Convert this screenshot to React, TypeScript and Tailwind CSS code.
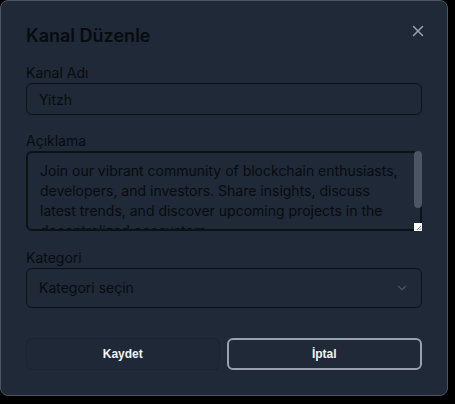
import { X, ChevronDown } from "lucide-react";

const DESC =
  "Join our vibrant community of blockchain enthusiasts, developers, and investors. Share insights, discuss latest trends, and discover upcoming projects in the decentralized ecosystem.";

export default function App() {
  return (
    <div className="h-[404px] w-[455px] bg-black font-['Inter',sans-serif]">
      <div className="relative w-[448px] rounded-lg border border-[#4b5563] bg-[#1f2937] px-[25px] pb-[25px] pt-[21px]">
        <button
          type="button"
          className="absolute right-[20px] top-[21px] text-gray-400"
        >
          <X size={18} strokeWidth={2} />
        </button>

        <h2 className="text-lg font-semibold leading-7 text-[#080b10]">
          Kanal Düzenle
        </h2>

        <div className="mt-[13px]">
          <label className="block text-sm leading-5 text-[#080b10]">Kanal Adı</label>
          <input
            defaultValue="Yitzh"
            className="block h-8 w-full rounded-md border border-[#0c1118] bg-transparent px-3 text-sm text-[#080b10] outline-none"
          />
        </div>

        <div className="mt-4">
          <label className="block text-sm leading-5 text-[#080b10]">Açıklama</label>
          <div className="relative">
            <textarea
              defaultValue={DESC}
              className="block h-20 w-full resize-none overflow-hidden rounded-md border-2 border-[#0c1118] bg-transparent px-3 pb-2 pt-[8px] text-sm leading-5 text-[#080b10] outline-none"
            />
            {/* scrollbar */}
            <div className="absolute right-0 top-0 h-[57px] w-2 rounded-full bg-[#4b5563]" />
            <div className="absolute bottom-0 right-0 flex h-2 w-2 items-end justify-end bg-white">
              <svg width="8" height="8" viewBox="0 0 8 8">
                <path d="M7 3 L3 7 M7 5.5 L5.5 7" stroke="#6b7280" strokeWidth="1" />
              </svg>
            </div>
          </div>
        </div>

        <div className="mt-[17px]">
          <label className="block text-sm leading-5 text-[#080b10]">Kategori</label>
          <div className="flex h-10 w-full items-center justify-between rounded-md border border-[#0c1118] px-3 text-sm text-[#080b10]">
            <span>Kategori seçin</span>
            <ChevronDown size={14} className="text-gray-600" />
          </div>
        </div>

        <div className="mt-[30px] flex gap-[7px]">
          <button
            type="button"
            className="h-8 flex-1 rounded-md border border-[#1c2431] bg-[#1f2836] font-['Liberation_Sans',sans-serif] text-xs font-bold text-gray-100"
          >
            Kaydet
          </button>
          <button
            type="button"
            className="h-8 flex-1 rounded-md border-2 border-gray-400 font-['Liberation_Sans',sans-serif] text-xs font-bold text-gray-100"
          >
            İptal
          </button>
        </div>
      </div>
    </div>
  );
}
